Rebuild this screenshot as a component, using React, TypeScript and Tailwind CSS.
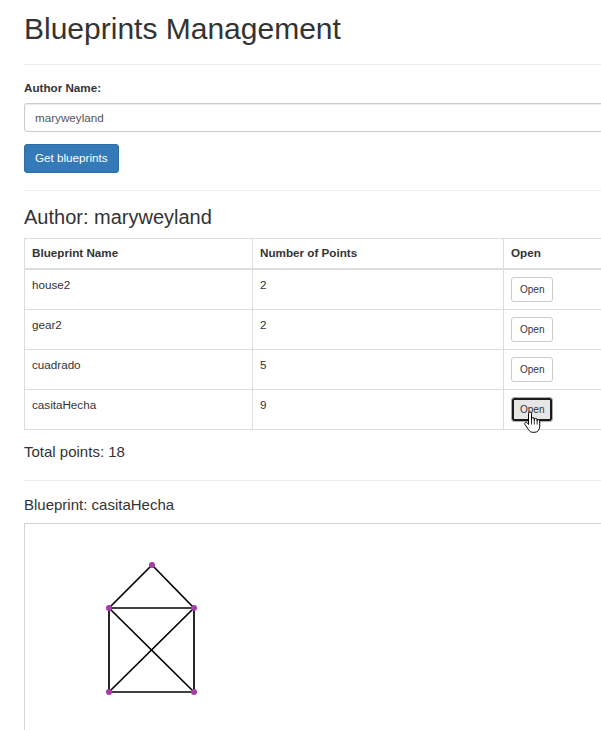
const blueprints = [
  { name: 'house2', points: 2 },
  { name: 'gear2', points: 2 },
  { name: 'cuadrado', points: 5 },
  { name: 'casitaHecha', points: 9 },
]

// casitaHecha, already scaled to the canvas
const house = {
  top: [127, 41],
  tl: [84, 84],
  tr: [169, 84],
  bl: [84, 168],
  br: [169, 168],
}

const edges: [keyof typeof house, keyof typeof house][] = [
  ['tl', 'top'],
  ['top', 'tr'],
  ['tl', 'tr'],
  ['tl', 'bl'],
  ['tr', 'br'],
  ['bl', 'br'],
  ['tl', 'br'],
  ['tr', 'bl'],
]

function HandCursor() {
  return (
    <svg width="18" height="23" viewBox="0 0 18 23" className="absolute left-[12px] top-[14px] pointer-events-none">
      <path
        d="M5.5 2.5a1.5 1.5 0 0 1 3 0V9.5V8a1.4 1.4 0 0 1 2.8 0v1.5V8.8a1.4 1.4 0 0 1 2.8 0v1.4V9.9a1.3 1.3 0 0 1 2.6 0V15.5c0 3.2-2 5.8-5 5.8H9.8c-2 0-3.2-1-4.2-2.6L2 13.6a1.4 1.4 0 0 1 2.3-1.7l1.2 1.6Z"
        fill="#fff"
        stroke="#000"
        strokeWidth="1"
        strokeLinejoin="round"
      />
      <path d="M8.5 9.5v4M11.3 9.5v4M14.1 10.2v3.3" stroke="#000" strokeWidth="0.8" />
    </svg>
  )
}

export default function App() {
  return (
    <div className="w-screen h-screen overflow-hidden bg-white text-[#333] font-['Liberation_Sans',Arial,sans-serif]">
      <div className="w-[760px] pl-[24px]">
        <h1 className="mt-[12px] text-[30px] leading-[33px] font-normal">Blueprints Management</h1>
        <hr className="mt-[19px] border-0 border-t border-[#eee]" />

        <label className="block mt-[15px] text-[11.67px] leading-[16.67px] font-bold">Author Name:</label>
        <input
          readOnly
          value="maryweyland"
          className="block mt-[6px] w-full h-[29px] px-[10px] border border-[#ccc] rounded-[3px] text-[11.67px] text-[#555] shadow-[inset_0_1px_1px_rgba(0,0,0,0.075)] outline-none"
        />
        <button className="block mt-[12px] h-[29px] px-[10px] bg-[#337ab7] border border-[#2e6da4] rounded-[3px] text-white text-[11.67px] leading-[16.67px]">
          Get blueprints
        </button>
        <hr className="mt-[17px] border-0 border-t border-[#eee]" />

        <h3 className="mt-[15px] text-[20px] leading-[22px] font-normal">Author: maryweyland</h3>
        <table className="mt-[10px] w-[716px] border-collapse text-[11.67px] leading-[16.67px]">
          <thead>
            <tr>
              <th className="w-[228px] text-left align-bottom font-bold px-[7px] pt-[6px] pb-[7px] border border-[#ddd] border-b-2">Blueprint Name</th>
              <th className="w-[251px] text-left align-bottom font-bold px-[7px] pt-[6px] pb-[7px] border border-[#ddd] border-b-2">Number of Points</th>
              <th className="text-left align-bottom font-bold px-[7px] pt-[6px] pb-[7px] border border-[#ddd] border-b-2">Open</th>
            </tr>
          </thead>
          <tbody>
            {blueprints.map((bp, i) => {
              const active = i === blueprints.length - 1
              return (
                <tr key={bp.name}>
                  <td className="align-top px-[7px] py-[7px] border border-[#ddd]">{bp.name}</td>
                  <td className="align-top px-[7px] py-[7px] border border-[#ddd]">{bp.points}</td>
                  <td className="align-top px-[7px] py-[7px] border border-[#ddd]">
                    <span className="relative inline-block align-top">
                      <button
                        className={
                          active
                            ? 'block h-[25px] px-[8px] text-[10px] leading-[15px] rounded-[3px] border border-[#adadad] bg-[#e6e6e6] shadow-[inset_0_0_0_2px_#1a1a1a] text-[#333]'
                            : 'block h-[25px] px-[8px] text-[10px] leading-[15px] rounded-[3px] border border-[#ccc] bg-white text-[#333]'
                        }
                      >
                        Open
                      </button>
                      {active && <HandCursor />}
                    </span>
                  </td>
                </tr>
              )
            })}
          </tbody>
        </table>

        <h4 className="mt-[14px] text-[15px] leading-[16.5px] font-normal">Total points: 18</h4>
        <hr className="mt-[19px] border-0 border-t border-[#eee]" />

        <h4 className="mt-[16px] text-[15px] leading-[16.5px] font-normal">Blueprint: casitaHecha</h4>
        <div className="mt-[10px] h-[420px] border border-[#d4d4d4] bg-white">
          <svg width="300" height="220" className="block">
            {edges.map(([a, b]) => (
              <line
                key={a + b}
                x1={house[a][0]}
                y1={house[a][1]}
                x2={house[b][0]}
                y2={house[b][1]}
                stroke="#000"
                strokeWidth="1.7"
              />
            ))}
            {Object.values(house).map(([x, y]) => (
              <circle key={`${x}-${y}`} cx={x} cy={y} r="3" fill="#a63ba8" />
            ))}
          </svg>
        </div>
      </div>
    </div>
  )
}
